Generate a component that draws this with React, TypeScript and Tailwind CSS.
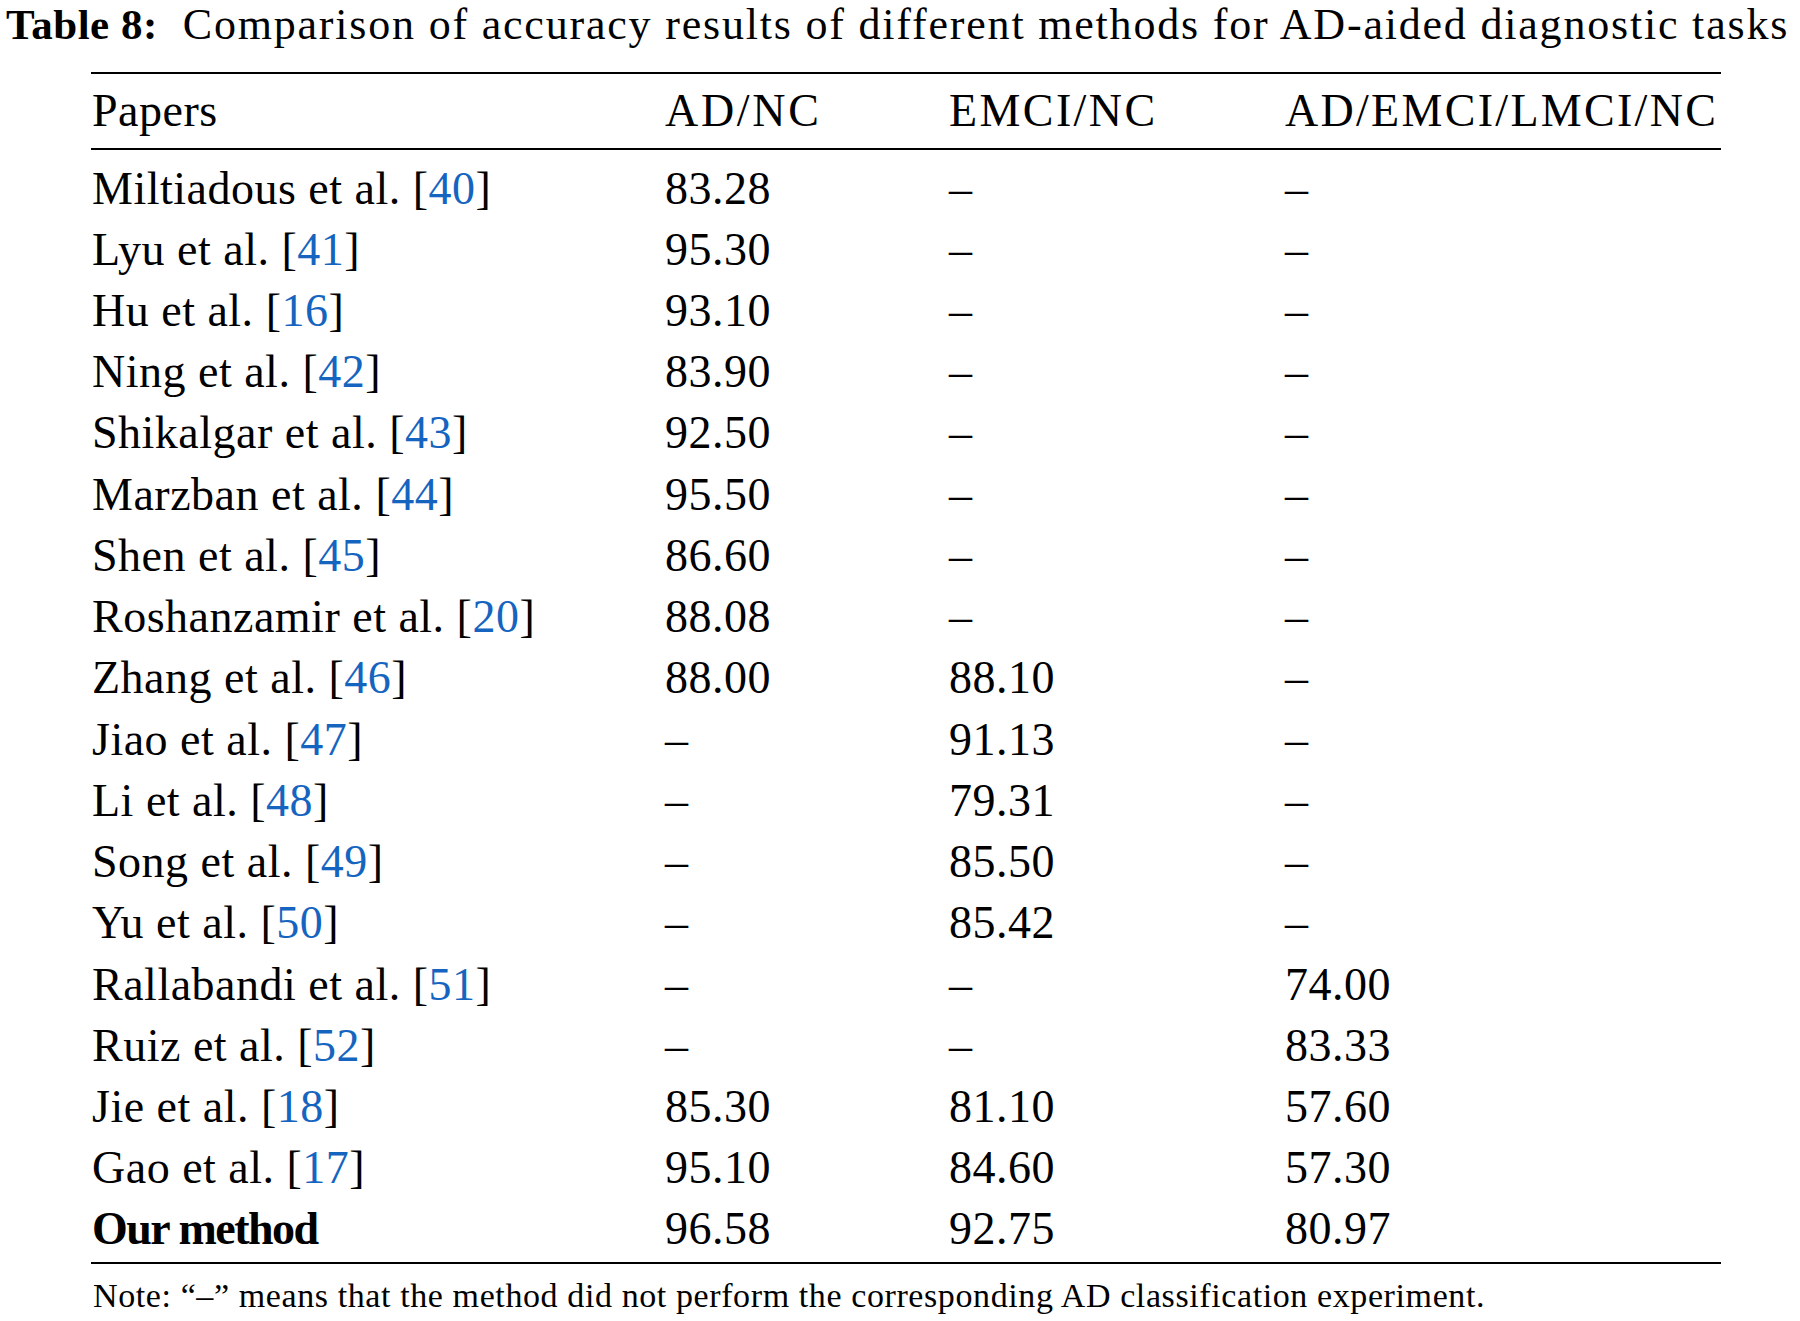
type Row = { name: string; ref?: string; bold?: boolean; cells: [string, string, string] };

const DASH = "–";

const rows: Row[] = [
  { name: "Miltiadous et al.", ref: "40", cells: ["83.28", DASH, DASH] },
  { name: "Lyu et al.", ref: "41", cells: ["95.30", DASH, DASH] },
  { name: "Hu et al.", ref: "16", cells: ["93.10", DASH, DASH] },
  { name: "Ning et al.", ref: "42", cells: ["83.90", DASH, DASH] },
  { name: "Shikalgar et al.", ref: "43", cells: ["92.50", DASH, DASH] },
  { name: "Marzban et al.", ref: "44", cells: ["95.50", DASH, DASH] },
  { name: "Shen et al.", ref: "45", cells: ["86.60", DASH, DASH] },
  { name: "Roshanzamir et al.", ref: "20", cells: ["88.08", DASH, DASH] },
  { name: "Zhang et al.", ref: "46", cells: ["88.00", "88.10", DASH] },
  { name: "Jiao et al.", ref: "47", cells: [DASH, "91.13", DASH] },
  { name: "Li et al.", ref: "48", cells: [DASH, "79.31", DASH] },
  { name: "Song et al.", ref: "49", cells: [DASH, "85.50", DASH] },
  { name: "Yu et al.", ref: "50", cells: [DASH, "85.42", DASH] },
  { name: "Rallabandi et al.", ref: "51", cells: [DASH, DASH, "74.00"] },
  { name: "Ruiz et al.", ref: "52", cells: [DASH, DASH, "83.33"] },
  { name: "Jie et al.", ref: "18", cells: ["85.30", "81.10", "57.60"] },
  { name: "Gao et al.", ref: "17", cells: ["95.10", "84.60", "57.30"] },
  { name: "Our method", bold: true, cells: ["96.58", "92.75", "80.97"] },
];

const grid = "grid grid-cols-[573px_284px_336px_1fr] pl-[1px]";

export default function App() {
  return (
    <div className="min-h-[1321px] w-[1800px] bg-white text-black font-['Liberation_Serif','Times_New_Roman',serif]">
      <div className="h-[72px] whitespace-nowrap pl-[6px] leading-[49px]">
        <span className="text-[43px] font-bold tracking-[0.5px]">Table 8:</span>
        <span className="ml-[25px] text-[44px] tracking-[1.8px]">
          Comparison of accuracy results of different methods for AD-aided diagnostic tasks
        </span>
      </div>

      <div className="ml-[91px] w-[1630px]">
        <div className="border-t-2 border-black" />
        <div className={`${grid} h-[74px] text-[46px] leading-[74px] tracking-[0.5px]`}>
          <div>Papers</div>
          <div className="tracking-[2.7px]">AD/NC</div>
          <div className="tracking-[2.4px]">EMCI/NC</div>
          <div className="tracking-[2.3px]">AD/EMCI/LMCI/NC</div>
        </div>
        <div className="border-t-2 border-black" />

        <div className="pt-[7.5px] pb-[2.2px] text-[46px] leading-[61.24px] tracking-[0.5px]">
          {rows.map((row) => (
            <div key={row.name} className={`${grid} h-[61.24px] whitespace-nowrap`}>
              <div>
                {row.bold ? (
                  <span className="font-bold tracking-[-1.5px]">{row.name}</span>
                ) : (
                  <>
                    {row.name} [<span className="text-[#1565c0]">{row.ref}</span>]
                  </>
                )}
              </div>
              {row.cells.map((value, i) => (
                <div key={i}>{value}</div>
              ))}
            </div>
          ))}
        </div>

        <div className="border-t-2 border-black" />
        <div className="whitespace-nowrap pt-[15px] pl-[2px] text-[34px] leading-[34px] tracking-[0.6px]">
          Note: “–” means that the method did not perform the corresponding AD classification experiment.
        </div>
      </div>
    </div>
  );
}
